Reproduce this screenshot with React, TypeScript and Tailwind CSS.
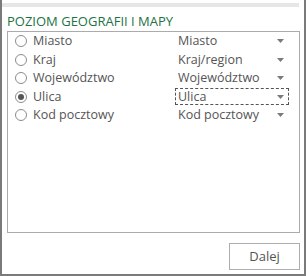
const rows = [
  { label: "Miasto", value: "Miasto" },
  { label: "Kraj", value: "Kraj/region" },
  { label: "Województwo", value: "Województwo" },
  { label: "Ulica", value: "Ulica", selected: true },
  { label: "Kod pocztowy", value: "Kod pocztowy" },
];

const Radio = ({ checked }: { checked?: boolean }) => (
  <span className="flex h-[12px] w-[12px] shrink-0 items-center justify-center rounded-full border border-[#8c8c8c] bg-white">
    {checked && <span className="h-[6px] w-[6px] rounded-full bg-[#555]" />}
  </span>
);

const Arrow = () => (
  <svg width="7" height="4" viewBox="0 0 7 4" className="shrink-0">
    <path d="M0 0h7L3.5 4z" fill="#7a7a7a" />
  </svg>
);

export default function App() {
  return (
    <div
      className="flex h-[276px] w-[306px] flex-col border-x-2 border-b-2 border-[#7a7a7a] bg-white text-[12.5px] text-[#555]"
      style={{ fontFamily: '"Segoe UI", "Open Sans", sans-serif' }}
    >
      <div className="mt-[3px] mr-[5px] h-[4px] bg-[#e6e6e6]" />
      <h2 className="mt-[4px] ml-[5px] h-[20px] leading-[20px] text-[13px] font-normal text-[#217346]">
        POZIOM GEOGRAFII I MAPY
      </h2>
      <div className="ml-[5px] mr-[4px] h-[202px] border border-[#ababab]">
        {rows.map((r) => (
          <div key={r.label} className="flex h-[18.5px] items-center">
            <div className="flex w-[167px] items-center gap-[6px] pl-[7px]">
              <Radio checked={r.selected} />
              <span className="leading-none">{r.label}</span>
            </div>
            <div
              className={`flex h-[17px] w-[114px] items-center justify-between pl-[2px] pr-[4px] ${
                r.selected ? "border border-dashed border-[#555]" : "border border-transparent"
              }`}
            >
              <span className="leading-none">{r.value}</span>
              <Arrow />
            </div>
          </div>
        ))}
      </div>
      <div className="mt-[10px] mr-[4px] flex justify-end">
        <button className="h-[27px] w-[71px] border border-[#adadad] bg-white text-[13px] text-[#555]">
          Dalej
        </button>
      </div>
    </div>
  );
}
